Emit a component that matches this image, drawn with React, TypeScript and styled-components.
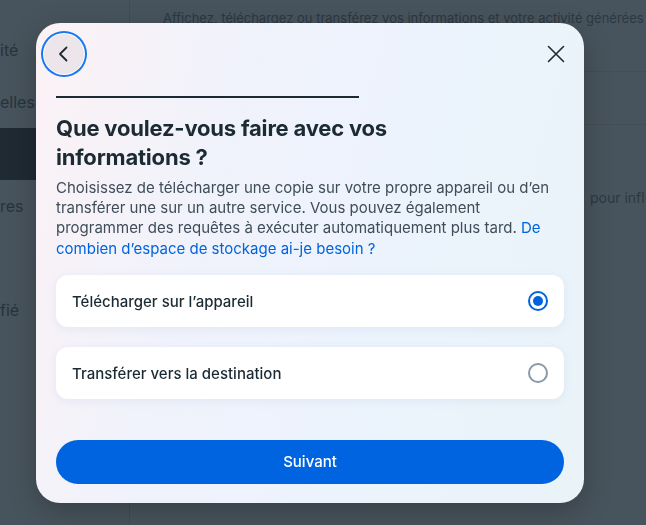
import styled, { createGlobalStyle } from "styled-components";
import { useState } from "react";

const GlobalStyle = createGlobalStyle`
  * {
    box-sizing: border-box;
  }
  body {
    margin: 0;
    font-family: Inter, "Noto Sans", "Liberation Sans", sans-serif;
    background-color: #48545d;
    overflow: hidden;
  }
`;

const Page = styled.div`
  display: flex;
  height: 100vh;
  color: #27333c;
`;

const Sidebar = styled.nav`
  width: 130px;
  flex-shrink: 0;
  padding-top: 24px;
  border-right: 1px solid #414c54;
  display: flex;
  flex-direction: column;
`;

const SidebarItem = styled.div<{ $active?: boolean }>`
  height: 52px;
  display: flex;
  align-items: center;
  font-size: 16px;
  color: #27333c;
  background-color: ${({ $active }) => ($active ? "#1f2a33" : "transparent")};
`;

const Main = styled.main`
  flex: 1;
  display: flex;
  flex-direction: column;
  overflow: hidden;
`;

const MainHeader = styled.div`
  height: 72px;
  padding: 10px 0 0 33px;
  font-size: 13px;
  white-space: nowrap;
  overflow: hidden;
  color: #2c3841;
  border-bottom: 1px solid #434e56;
`;

const MainRow = styled.div`
  height: 53px;
  border-bottom: 1px solid #434e56;
`;

const MainText = styled.p`
  margin: 64px 0 0;
  padding-left: 460px;
  font-size: 14px;
  white-space: nowrap;
  overflow: hidden;
  color: #2c3841;
`;

const Overlay = styled.div`
  position: fixed;
  inset: 0;
  display: flex;
  align-items: center;
  padding-left: 36px;
`;

const Modal = styled.div`
  width: 548px;
  height: 480px;
  border-radius: 24px;
  background: linear-gradient(105deg, #fcf2f6 0%, #f1f2fb 30%, #ecf3fd 60%, #eaf3f8 100%);
  box-shadow: 0 8px 28px rgba(0, 0, 0, 0.25);
  display: flex;
  flex-direction: column;
  padding: 11px 0 19px;
`;

const ModalHeader = styled.div`
  display: flex;
  justify-content: space-between;
  align-items: center;
  padding: 0 8px;
`;

const IconButton = styled.button<{ $focused?: boolean }>`
  width: 40px;
  height: 40px;
  border-radius: 50%;
  border: none;
  padding: 0;
  display: flex;
  align-items: center;
  justify-content: center;
  cursor: pointer;
  color: #1c2b33;
  background-color: ${({ $focused }) => ($focused ? "#ece5ea" : "transparent")};
  box-shadow: ${({ $focused }) =>
    $focused ? "0 0 0 1px #ffffff, 0 0 0 3px #1877f2" : "none"};
`;

const Body = styled.div`
  display: flex;
  flex-direction: column;
  padding: 0 20px;
  flex: 1;
`;

const Divider = styled.div`
  width: 303px;
  height: 2px;
  background-color: #1c2b33;
  margin-top: 22px;
`;

const Title = styled.h2`
  margin: 16px 0 0;
  max-width: 440px;
  font-size: 22px;
  line-height: 29px;
  font-weight: 700;
  letter-spacing: -0.2px;
  color: #1c2b33;
`;

const Description = styled.p`
  margin: 6px 0 0;
  font-size: 15px;
  line-height: 20.4px;
  color: #3f4d58;
`;

const Link = styled.a`
  color: #0064e0;
  text-decoration: none;
`;

const Options = styled.div`
  display: flex;
  flex-direction: column;
  gap: 20px;
  margin-top: 16px;
`;

const Option = styled.label`
  height: 52px;
  border-radius: 12px;
  background-color: #ffffff;
  box-shadow: 0 2px 10px rgba(160, 180, 210, 0.18);
  display: flex;
  align-items: center;
  justify-content: space-between;
  padding: 0 16px;
  font-size: 15px;
  font-weight: 500;
  color: #1c2b33;
  cursor: pointer;
`;

const Radio = styled.span<{ $checked: boolean }>`
  width: 20px;
  height: 20px;
  border-radius: 50%;
  border: 2px solid ${({ $checked }) => ($checked ? "#0064e0" : "#8a99a6")};
  display: flex;
  align-items: center;
  justify-content: center;

  &::after {
    content: "";
    width: 10px;
    height: 10px;
    border-radius: 50%;
    background-color: ${({ $checked }) => ($checked ? "#0064e0" : "transparent")};
  }
`;

const PrimaryButton = styled.button`
  margin-top: auto;
  height: 44px;
  border: none;
  border-radius: 22px;
  background-color: #0064e0;
  color: #ffffff;
  font-family: inherit;
  font-size: 15px;
  font-weight: 500;
  cursor: pointer;
`;

const options = ["Télécharger sur l’appareil", "Transférer vers la destination"];

export default function App() {
  const [selected, setSelected] = useState(0);

  return (
    <>
      <GlobalStyle />
      <Page>
        <Sidebar>
          <SidebarItem>ité</SidebarItem>
          <SidebarItem>elles</SidebarItem>
          <SidebarItem $active />
          <SidebarItem>res</SidebarItem>
          <SidebarItem />
          <SidebarItem>fié</SidebarItem>
        </Sidebar>
        <Main>
          <MainHeader>
            Affichez, téléchargez ou transférez vos informations et votre activité générées
          </MainHeader>
          <MainRow />
          <MainText>pour influencer</MainText>
        </Main>
      </Page>

      <Overlay>
        <Modal>
          <ModalHeader>
            <IconButton $focused aria-label="Retour">
              <svg width="20" height="20" viewBox="0 0 20 20" fill="none">
                <path
                  d="M12.5 3.5 6 10l6.5 6.5"
                  stroke="currentColor"
                  strokeWidth="1.8"
                  strokeLinecap="round"
                  strokeLinejoin="round"
                />
              </svg>
            </IconButton>
            <IconButton aria-label="Fermer">
              <svg width="20" height="20" viewBox="0 0 20 20" fill="none">
                <path
                  d="M2.5 2.5l15 15M17.5 2.5l-15 15"
                  stroke="currentColor"
                  strokeWidth="1.6"
                  strokeLinecap="round"
                />
              </svg>
            </IconButton>
          </ModalHeader>
          <Body>
            <Divider />
            <Title>Que voulez-vous faire avec vos informations{"\u00a0"}?</Title>
            <Description>
              Choisissez de télécharger une copie sur votre propre appareil ou d’en
              transférer une sur un autre service. Vous pouvez également
              programmer des requêtes à exécuter automatiquement plus tard.{" "}
              <Link href="#">De combien d’espace de stockage ai-je besoin{"\u00a0"}?</Link>
            </Description>
            <Options>
              {options.map((label, i) => (
                <Option key={label} onClick={() => setSelected(i)}>
                  {label}
                  <Radio $checked={selected === i} />
                </Option>
              ))}
            </Options>
            <PrimaryButton>Suivant</PrimaryButton>
          </Body>
        </Modal>
      </Overlay>
    </>
  );
}
